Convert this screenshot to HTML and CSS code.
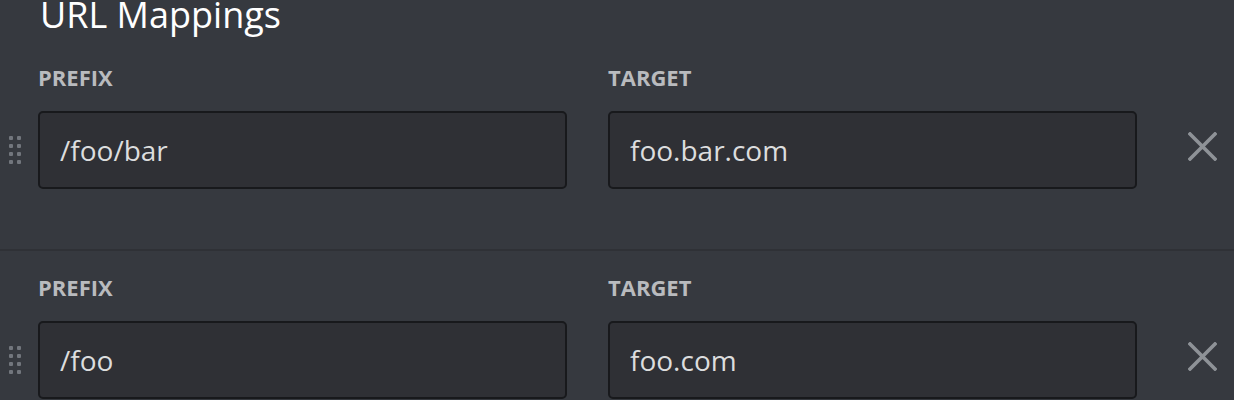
FILE: index.html
```html
<!DOCTYPE html>
<html lang="en">
<head>
    <meta charset="UTF-8">
    <meta name="viewport" content="width=device-width, initial-scale=1.0">
    <title>URL Mappings</title>
    <link rel="stylesheet" href="styles.css">
</head>
<body>
    <div class="mappings">
        <h2>URL Mappings</h2>

        <div class="mapping-row">
            <div class="drag-handle"><span></span><span></span><span></span><span></span><span></span><span></span><span></span><span></span></div>
            <div class="field">
                <label for="prefix-1">Prefix</label>
                <input type="text" id="prefix-1" value="/foo/bar">
            </div>
            <div class="field">
                <label for="target-1">Target</label>
                <input type="text" id="target-1" value="foo.bar.com">
            </div>
            <button class="remove" type="button" aria-label="Remove">
                <svg width="29" height="29" viewBox="0 0 29 29"><path d="M2 2 L27 27 M27 2 L2 27" stroke="currentColor" stroke-width="3.6" stroke-linecap="square" fill="none"/></svg>
            </button>
        </div>

        <div class="mapping-row">
            <div class="drag-handle"><span></span><span></span><span></span><span></span><span></span><span></span><span></span><span></span></div>
            <div class="field">
                <label for="prefix-2">Prefix</label>
                <input type="text" id="prefix-2" value="/foo">
            </div>
            <div class="field">
                <label for="target-2">Target</label>
                <input type="text" id="target-2" value="foo.com">
            </div>
            <button class="remove" type="button" aria-label="Remove">
                <svg width="29" height="29" viewBox="0 0 29 29"><path d="M2 2 L27 27 M27 2 L2 27" stroke="currentColor" stroke-width="3.6" stroke-linecap="square" fill="none"/></svg>
            </button>
        </div>
    </div>
</body>
</html>
```
FILE: styles.css
```css
body {
    margin: 0;
    background-color: #36393f;
    font-family: "Open Sans", "Noto Sans", sans-serif;
    overflow: hidden;
}
.mappings h2 {
    margin: 0 0 11px 40px;
    font-size: 36px;
    line-height: 30px;
    font-weight: 500;
    color: #ffffff;
}
.mapping-row {
    display: flex;
    padding: 25px 0 60px;
    border-bottom: 2px solid #2f3136;
}
.drag-handle {
    align-self: flex-end;
    box-sizing: border-box;
    width: 38px;
    height: 78px;
    padding: 0 0 0 9px;
    display: grid;
    grid-template-columns: 4px 4px;
    grid-auto-rows: 4px;
    column-gap: 4px;
    row-gap: 4px;
    align-content: center;
}
.drag-handle span {
    background-color: #72767d;
    border-radius: 1px;
}
.field {
    display: flex;
    flex-direction: column;
    width: 529px;
}
.field + .field {
    margin-left: 41px;
}
.field label {
    display: block;
    margin-bottom: 23px;
    font-size: 22px;
    line-height: 22px;
    font-weight: 700;
    text-transform: uppercase;
    color: #b9bbbe;
}
.field input {
    box-sizing: border-box;
    width: 100%;
    height: 78px;
    padding: 0 20px;
    background-color: #2f3035;
    border: 2px solid #18191c;
    border-radius: 5px;
    font-family: inherit;
    font-size: 28px;
    color: #dcddde;
    outline: none;
}
.remove {
    align-self: flex-end;
    height: 78px;
    margin-left: 51px;
    padding: 0 0 8px;
    background: none;
    border: none;
    color: #8e9297;
    cursor: pointer;
    display: flex;
    align-items: center;
}
```
